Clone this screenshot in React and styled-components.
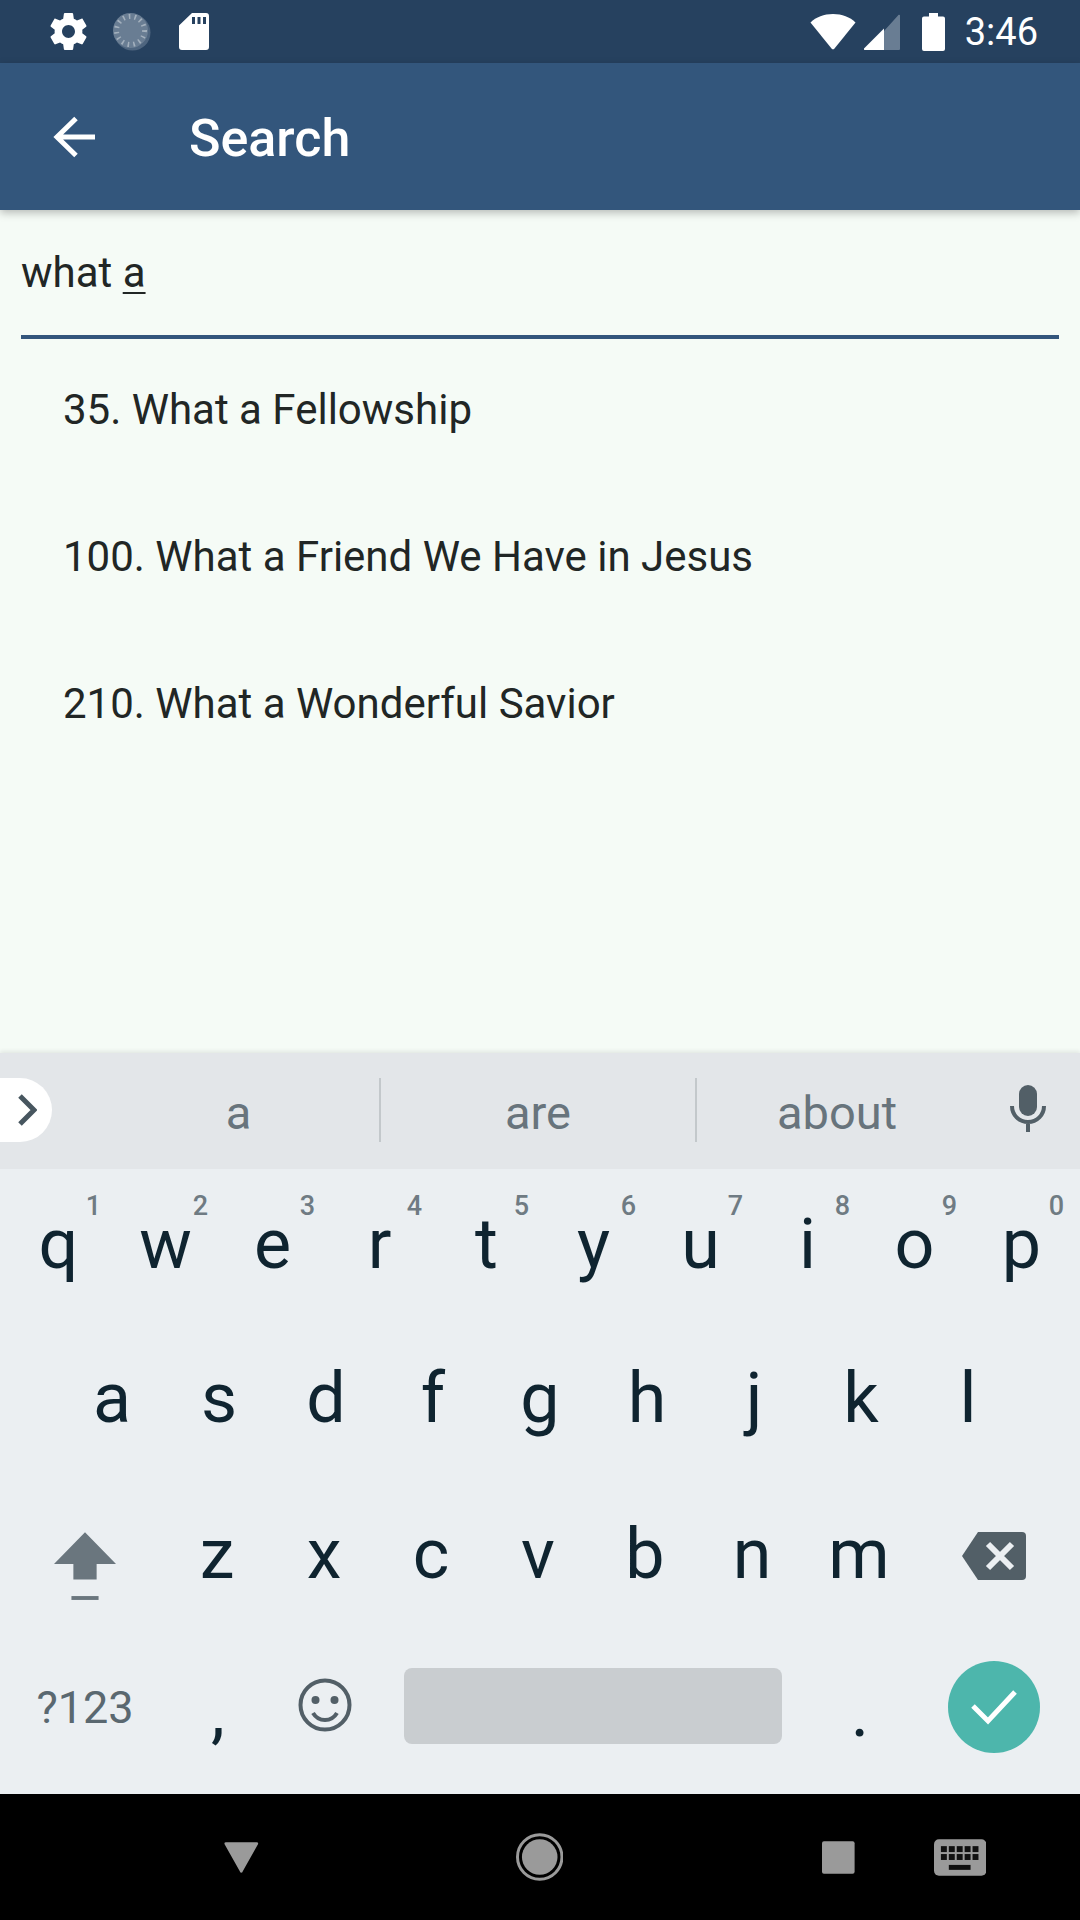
import React from 'react';
import styled, { createGlobalStyle } from 'styled-components';

const Global = createGlobalStyle`
  html, body { margin: 0; padding: 0; background: #000; }
  * { box-sizing: border-box; }
`;

const Screen = styled.div`
  width: 1080px;
  height: 1920px;
  display: flex;
  flex-direction: column;
  overflow: hidden;
  font-family: Roboto, "Liberation Sans", sans-serif;
  background: #f5fbf6;
`;

const StatusBar = styled.div`
  height: 63px;
  flex: none;
  display: flex;
  align-items: center;
  justify-content: space-between;
  padding: 0 42px 0 50px;
  background: #26415f;
  color: #fff;
`;
const StatusGroup = styled.div`
  display: flex;
  align-items: center;
  gap: ${(p) => p.$gap}px;
  margin-left: ${(p) => p.$left || 0}px;
`;
const Clock = styled.span`
  font-size: 38px;
  line-height: 63px;
  margin-left: 20px;
  padding-top: 2px;
`;

const AppBar = styled.header`
  height: 147px;
  flex: none;
  display: flex;
  align-items: center;
  padding-left: 53px;
  gap: 94px;
  background: #33567c;
  color: #fff;
  box-shadow: 0 3px 8px rgba(0, 0, 0, 0.25);
  position: relative;
  z-index: 1;
`;
const Title = styled.h1`
  margin: 0;
  padding-top: 4px;
  font-size: 52px;
  font-weight: 500;
`;

const Content = styled.main`
  flex: 1;
  display: flex;
  flex-direction: column;
  color: #212625;
  font-size: 42px;
`;
const SearchField = styled.div`
  height: 129px;
  margin: 0 21px;
  padding-top: 39px;
  line-height: 48px;
  border-bottom: 4px solid #33567c;
`;
const Composing = styled.span`
  text-decoration: underline;
  text-underline-offset: 5px;
  text-decoration-thickness: 2px;
`;
const ResultList = styled.ul`
  list-style: none;
  margin: -3px 0 0;
  padding: 0 0 0 63px;
`;
const Result = styled.li`
  height: 147px;
  display: flex;
  align-items: center;
`;

const Keyboard = styled.section`
  height: 741px;
  flex: none;
  background: #ebeff2;
  box-shadow: 0 -2px 4px rgba(0, 0, 0, 0.08);
  color: #0f2430;
`;
const Suggestions = styled.div`
  height: 116px;
  display: flex;
  align-items: center;
  background: #e3e6e9;
  color: #68747c;
  font-size: 47px;
`;
const ExpandPill = styled.div`
  width: 52px;
  height: 64px;
  flex: none;
  margin-top: -2px;
  display: flex;
  align-items: center;
  padding-left: 17px;
  background: #fff;
  border-radius: 0 32px 32px 0;
`;
const Suggestion = styled.div`
  width: ${(p) => p.$w}px;
  height: 64px;
  flex: none;
  margin-top: -2px;
  display: flex;
  align-items: center;
  justify-content: center;
  padding: 4px 0 0 ${(p) => p.$indent || 0}px;
  border-right: ${(p) => (p.$divider ? '2px solid #c3c8cb' : 'none')};
`;
const MicSlot = styled.div`
  flex: 1;
  display: flex;
  justify-content: center;
  margin-top: -6px;
  padding-right: 2px;
`;

const KeyRow = styled.div`
  height: 156px;
  display: flex;
  justify-content: center;
`;
// $up / $down nudge the glyph inside its key
const Key = styled.div`
  width: ${(p) => p.$w || 107}px;
  flex: none;
  position: relative;
  display: flex;
  align-items: center;
  justify-content: center;
  font-size: 70px;
  line-height: 1;
  padding-bottom: ${(p) => (p.$up || 0) * 2}px;
  padding-top: ${(p) => (p.$down || 0) * 2}px;
`;
const Hint = styled.span`
  position: absolute;
  top: 24px;
  right: 11px;
  font-size: 27px;
  font-weight: 500;
  color: #6f7b83;
`;
const ModeKey = styled(Key)`
  font-size: 45px;
  color: #5a6870;
`;
const SpaceBar = styled.div`
  width: 378px;
  height: 76px;
  border-radius: 8px;
  background: #c9cdd0;
`;
const EnterButton = styled.div`
  width: 92px;
  height: 92px;
  border-radius: 50%;
  background: #4db6ac;
  display: flex;
  align-items: center;
  justify-content: center;
`;

const NavBar = styled.nav`
  height: 126px;
  flex: none;
  background: #000;
  display: flex;
  align-items: center;
  padding: 0 94px 0 224px;
`;
const NavSpacer = styled.div`
  width: ${(p) => p.$w}px;
  flex: none;
`;

const Gear = () => (
  <svg width="37" height="37" viewBox="2 2 20 20" fill="#fff">
    <path d="M19.43 12.98c.04-.32.07-.64.07-.98s-.03-.66-.07-.98l2.11-1.65c.19-.15.24-.42.12-.64l-2-3.46c-.12-.22-.39-.3-.61-.22l-2.49 1c-.52-.4-1.08-.73-1.69-.98l-.38-2.65C14.46 2.18 14.25 2 14 2h-4c-.25 0-.46.18-.49.42l-.38 2.65c-.61.25-1.17.59-1.69.98l-2.49-1c-.23-.09-.49 0-.61.22l-2 3.46c-.13.22-.07.49.12.64l2.11 1.65c-.04.32-.07.65-.07.98s.03.66.07.98l-2.11 1.65c-.19.15-.24.42-.12.64l2 3.46c.12.22.39.3.61.22l2.49-1c.52.4 1.08.73 1.69.98l.38 2.65c.03.24.24.42.49.42h4c.25 0 .46-.18.49-.42l.38-2.65c.61-.25 1.17-.59 1.69-.98l2.49 1c.23.09.49 0 .61-.22l2-3.46c.12-.22.07-.49-.12-.64l-2.11-1.65zM12 15.5c-1.93 0-3.5-1.57-3.5-3.5s1.57-3.5 3.5-3.5 3.5 1.57 3.5 3.5-1.57 3.5-3.5 3.5z" />
  </svg>
);

const Dial = () => (
  <svg width="40" height="38" viewBox="0 0 40 38">
    <path d="M32 5a18 18 0 0 1-25 26 18 18 0 0 0 25-26z" fill="#fff" />
    <circle cx="19.500" cy="19.500" r="18" fill="#8c9cae" opacity="0.4" />
    <circle cx="17.500" cy="17.500" r="17.500" fill="#697d93" />
    <circle cx="17.500" cy="17.500" r="14" fill="none" stroke="#a3b0bd" strokeWidth="5" strokeDasharray="1.6 4.2" />
  </svg>
);

const SdCard = () => (
  <svg width="30" height="37" viewBox="0 0 30 37" fill="#fff">
    <path fillRule="evenodd" d="M13 0h14a3 3 0 0 1 3 3v31a3 3 0 0 1-3 3H3a3 3 0 0 1-3-3V12.500zM13 4v7h3V4zM18.500 4v7h3V4zM24 4v7h3V4z" />
  </svg>
);

const Wifi = () => (
  <svg width="46" height="37" viewBox="0 0 46 37" fill="#fff">
    <path d="M0.500 9.500C6 4 14 1 23 1S40 4 45.500 9.500L24.500 35.500a2 2 0 0 1-3 0z" />
  </svg>
);

const Signal = () => (
  <svg width="36" height="36" viewBox="0 0 36 36">
    <path fill="#697d93" d="M20 17L34 1.500a1 1 0 0 1 2 0.500v33a1 1 0 0 1-1 1H20z" />
    <path fill="#fff" d="M20 14.500V36H1.500a1 1 0 0 1-1-2z" />
  </svg>
);

const Battery = () => (
  <svg width="23" height="38" viewBox="0 0 23 38" fill="#fff">
    <path d="M7 0h9v3.500h5a2 2 0 0 1 2 2V36a2 2 0 0 1-2 2H2a2 2 0 0 1-2-2V5.500a2 2 0 0 1 2-2h5z" />
  </svg>
);

const BackArrow = () => (
  <svg width="42" height="42" viewBox="0 0 42 42" fill="none" stroke="#fff" strokeWidth="5">
    <path d="M42 21H4M23 2.500L4 21l19 18.500" />
  </svg>
);

const Chevron = () => (
  <svg width="20" height="32" viewBox="0 0 20 32" fill="none" stroke="#47565f" strokeWidth="5">
    <path d="M3 2l14 14L3 30" />
  </svg>
);

const Mic = () => (
  <svg width="36" height="47" viewBox="0 0 36 47">
    <rect x="9" y="0" width="18" height="31" rx="9" fill="#525f67" />
    <path d="M2 21c0 9 7 16 16 16s16-7 16-16M18 37v10" fill="none" stroke="#525f67" strokeWidth="4" />
  </svg>
);

const Shift = () => (
  <svg width="62" height="72" viewBox="0 0 64 72" fill="#6a767e">
    <path d="M32 0l32 33H44v16H20V33H0z" />
    <rect x="18" y="66" width="28" height="4" />
  </svg>
);

const Backspace = () => (
  <svg width="64" height="48" viewBox="0 0 64 48">
    <path fill="#525f67" d="M16 0h44a4 4 0 0 1 4 4v40a4 4 0 0 1-4 4H16L0 24z" />
    <path stroke="#ebeff2" strokeWidth="6" d="M26 12l24 24M50 12L26 36" />
  </svg>
);

const Smiley = () => (
  <svg width="54" height="54" viewBox="0 0 54 54" fill="none" stroke="#525f67">
    <circle cx="27" cy="27" r="24.500" strokeWidth="4" />
    <path d="M15 35c3 5 7 7 12 7s9-2 12-7" strokeWidth="4" />
    <circle cx="17.500" cy="22" r="4" fill="#525f67" stroke="none" />
    <circle cx="36.500" cy="22" r="4" fill="#525f67" stroke="none" />
  </svg>
);

const Check = () => (
  <svg width="46" height="36" viewBox="0 0 46 36" fill="none" stroke="#fff" strokeWidth="5">
    <path d="M2 17l15 15L44 3" />
  </svg>
);

const NavBack = () => (
  <svg width="35" height="32" viewBox="0 0 35 32" fill="#9a9a9a">
    <path d="M2 1h31a1.500 1.500 0 0 1 1.400 2L19 30.500a1.500 1.500 0 0 1-3 0L.6 3A1.500 1.500 0 0 1 2 1z" />
  </svg>
);

const NavHome = () => (
  <svg width="48" height="48" viewBox="0 0 48 48">
    <circle cx="24" cy="24" r="22.500" fill="none" stroke="#9a9a9a" strokeWidth="3" />
    <circle cx="24" cy="24" r="18" fill="#9a9a9a" />
  </svg>
);

const NavRecent = () => (
  <svg width="33" height="33" viewBox="0 0 33 33">
    <rect width="33" height="33" rx="2" fill="#9a9a9a" />
  </svg>
);

const NavKeyboard = () => (
  <svg width="53" height="37" viewBox="0 0 53 37">
    <rect width="53" height="37" rx="5" fill="#9a9a9a" />
    {[0, 1].map((r) =>
      [0, 1, 2, 3, 4].map((c) => (
        <rect key={`${r}-${c}`} x={7 + c * 8} y={7 + r * 8} width="6" height="6" fill="#111" />
      ))
    )}
    <rect x="15" y="26" width="22" height="5" fill="#111" />
  </svg>
);

const topRow = [
  ['q', '1'], ['w', '2'], ['e', '3'], ['r', '4'], ['t', '5'],
  ['y', '6'], ['u', '7'], ['i', '8'], ['o', '9'], ['p', '0'],
];
const homeRow = ['a', 's', 'd', 'f', 'g', 'h', 'j', 'k', 'l'];
const bottomRow = ['z', 'x', 'c', 'v', 'b', 'n', 'm'];
const results = ['35. What a Fellowship', '100. What a Friend We Have in Jesus', '210. What a Wonderful Savior'];

export default function App() {
  return (
    <Screen>
      <Global />
      <StatusBar>
        <StatusGroup $gap={26}>
          <Gear />
          <Dial />
          <SdCard />
        </StatusGroup>
        <StatusGroup $gap={8}>
          <Wifi />
          <Signal />
          <StatusGroup $gap={0} $left={14}>
            <Battery />
            <Clock>3:46</Clock>
          </StatusGroup>
        </StatusGroup>
      </StatusBar>
      <AppBar>
        <BackArrow />
        <Title>Search</Title>
      </AppBar>
      <Content>
        <SearchField>
          what <Composing>a</Composing>
        </SearchField>
        <ResultList>
          {results.map((r) => (
            <Result key={r}>{r}</Result>
          ))}
        </ResultList>
      </Content>
      <Keyboard>
        <Suggestions>
          <ExpandPill>
            <Chevron />
          </ExpandPill>
          <Suggestion $w={329} $indent={46} $divider>a</Suggestion>
          <Suggestion $w={316} $divider>are</Suggestion>
          <Suggestion $w={280}>about</Suggestion>
          <MicSlot>
            <Mic />
          </MicSlot>
        </Suggestions>
        <KeyRow>
          {topRow.map(([k, n]) => (
            <Key key={k} $up={3}>
              {k}
              <Hint>{n}</Hint>
            </Key>
          ))}
        </KeyRow>
        <KeyRow>
          {homeRow.map((k) => (
            <Key key={k} $up={5}>{k}</Key>
          ))}
        </KeyRow>
        <KeyRow>
          <Key $w={158} $down={8}>
            <Shift />
          </Key>
          {bottomRow.map((k) => (
            <Key key={k} $up={5}>{k}</Key>
          ))}
          <Key $w={162} $up={3}>
            <Backspace />
          </Key>
        </KeyRow>
        <KeyRow>
          <ModeKey $w={159} $up={8}>?123</ModeKey>
          <Key $up={3}>,</Key>
          <Key $up={10}>
            <Smiley />
          </Key>
          <Key $w={428} $up={9}>
            <SpaceBar />
          </Key>
          <Key $up={3}>.</Key>
          <Key $w={161} $up={8}>
            <EnterButton>
              <Check />
            </EnterButton>
          </Key>
        </KeyRow>
      </Keyboard>
      <NavBar>
        <NavBack />
        <NavSpacer $w={257} />
        <NavHome />
        <NavSpacer $w={259} />
        <NavRecent />
        <NavSpacer $w={79} />
        <NavKeyboard />
      </NavBar>
    </Screen>
  );
}
